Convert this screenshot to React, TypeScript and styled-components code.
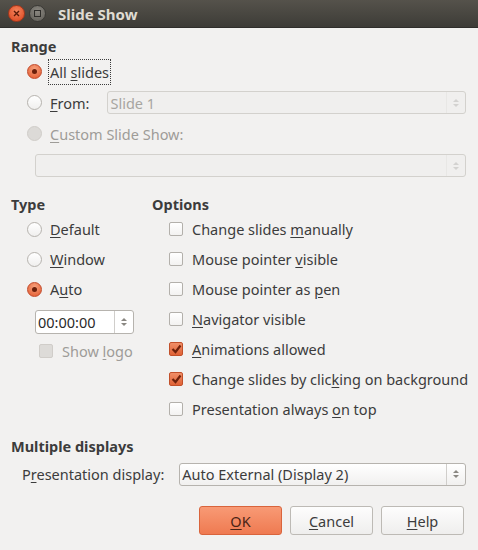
import React from 'react'
import styled, {createGlobalStyle, css} from 'styled-components'

const GlobalStyle = createGlobalStyle`
  html, body {
    margin: 0;
    padding: 0;
    background: #f2f1f0;
  }
  body {
    font-family: 'Noto Sans', 'DejaVu Sans', sans-serif;
    font-size: 14.5px;
    color: #3c3c3c;
  }
`

const Window = styled.div`
  width: 478px;
  height: 550px;
  background: #f2f1f0;
  display: flex;
  flex-direction: column;
  overflow: hidden;
`

const TitleBar = styled.div`
  height: 28px;
  flex: 0 0 28px;
  display: flex;
  align-items: center;
  padding-left: 8px;
  gap: 4px;
  background: linear-gradient(#55524b, #3d3c37);
  border-bottom: 1px solid #2f2e2b;
  box-sizing: border-box;
`

const WinButton = styled.span<{$close?: boolean}>`
  width: 17px;
  height: 17px;
  border-radius: 50%;
  display: flex;
  align-items: center;
  justify-content: center;
  box-sizing: border-box;
  ${({$close}) =>
    $close
      ? css`
          background: radial-gradient(circle at 50% 35%, #f5845c, #d9441d);
          border: 1px solid #a8361a;
        `
      : css`
          background: radial-gradient(circle at 50% 35%, #8a8780, #5f5d57);
          border: 1px solid #3a3935;
        `}
`

const Title = styled.span`
  margin-left: 8px;
  color: #dfdbd2;
  font-weight: 700;
  font-size: 15px;
`

const Body = styled.div`
  padding: 9px 12px 0 11px;
  display: flex;
  flex-direction: column;
`

const Heading = styled.div<{$mt?: number; $pl?: number}>`
  font-weight: 700;
  height: 19px;
  line-height: 19px;
  margin-top: ${({$mt}) => $mt ?? 0}px;
  padding-left: ${({$pl}) => $pl ?? 0}px;
  color: #3c3c3c;
`

const Indent = styled.div<{$pl: number}>`
  padding-left: ${({$pl}) => $pl}px;
  display: flex;
  flex-direction: column;
`

const Row = styled.div<{$h: number; $mt?: number; $pl?: number}>`
  height: ${({$h}) => $h}px;
  margin-top: ${({$mt}) => $mt ?? 0}px;
  padding-left: ${({$pl}) => $pl ?? 0}px;
  display: flex;
  align-items: center;
`

const Label = styled.span<{$disabled?: boolean; $focus?: boolean; $gap?: number}>`
  margin-left: ${({$gap}) => $gap ?? 8}px;
  white-space: nowrap;
  color: ${({$disabled}) => ($disabled ? '#9e9c98' : '#3c3c3c')};
  ${({$focus}) =>
    $focus &&
    css`
      outline: 1px dotted #3c3c3c;
      outline-offset: 0;
      padding: 2px 1px;
      margin-left: 7px;
    `}
  u {
    text-decoration-thickness: 1px;
    text-underline-offset: 2px;
  }
`

const RadioDot = styled.span<{$state: 'on' | 'off' | 'disabled'}>`
  width: 15px;
  height: 15px;
  border-radius: 50%;
  box-sizing: border-box;
  display: flex;
  align-items: center;
  justify-content: center;
  flex: 0 0 15px;
  ${({$state}) =>
    $state === 'on'
      ? css`
          background: radial-gradient(circle at 50% 30%, #f7a07c, #e2582c);
          border: 1px solid #c2492a;
          &::after {
            content: '';
            width: 5px;
            height: 5px;
            border-radius: 50%;
            background: #6b1f0a;
          }
        `
      : $state === 'off'
        ? css`
            background: linear-gradient(#ffffff, #f0efee);
            border: 1px solid #b6b3ae;
          `
        : css`
            background: #dcdad7;
            border: 1px solid #d0cdc9;
          `}
`

const CheckBox = styled.span<{$checked?: boolean; $disabled?: boolean}>`
  width: 14px;
  height: 14px;
  border-radius: 2px;
  box-sizing: border-box;
  flex: 0 0 14px;
  display: flex;
  align-items: center;
  justify-content: center;
  ${({$checked, $disabled}) =>
    $checked
      ? css`
          background: linear-gradient(#f08f68, #e06236);
          border: 1px solid #c2502a;
        `
      : $disabled
        ? css`
            background: #dddbd8;
            border: 1px solid #d0cdc9;
          `
        : css`
            background: linear-gradient(#ffffff, #f3f2f1);
            border: 1px solid #b3b0ab;
          `}
`

const Combo = styled.div<{$disabled?: boolean; $ml?: number}>`
  height: 23px;
  flex: 1;
  box-sizing: border-box;
  display: flex;
  align-items: center;
  border: 1px solid ${({$disabled}) => ($disabled ? '#d3d1cd' : '#b6b3ae')};
  border-radius: 3px;
  background: ${({$disabled}) =>
    $disabled ? '#f0efee' : 'linear-gradient(#ffffff, #f1f0ef)'};
  margin-left: ${({$ml}) => $ml ?? 0}px;
  color: ${({$disabled}) => ($disabled ? '#a7a5a1' : '#3c3c3c')};
`

const ComboText = styled.span`
  flex: 1;
  padding-left: 2px;
  white-space: nowrap;
  overflow: hidden;
`

const Stepper = styled.span<{$disabled?: boolean}>`
  width: 18px;
  height: 100%;
  border-left: 1px solid ${({$disabled}) => ($disabled ? '#e0dedb' : '#d0cecb')};
  display: flex;
  align-items: center;
  justify-content: center;
  opacity: ${({$disabled}) => ($disabled ? 0.45 : 1)};
`

const SpinBox = styled.div`
  width: 99px;
  height: 24px;
  margin-top: 6px;
  margin-left: 24px;
  box-sizing: border-box;
  display: flex;
  align-items: center;
  border: 1px solid #b6b3ae;
  border-radius: 3px;
  background: #ffffff;
  color: #2a2a2a;
`

const Columns = styled.div`
  display: flex;
`

const LeftCol = styled.div`
  flex: 0 0 141px;
  display: flex;
  flex-direction: column;
`

const RightCol = styled.div`
  flex: 1;
  min-width: 0;
  display: flex;
  flex-direction: column;
`

const DisplayRow = styled.div`
  height: 36px;
  display: flex;
  align-items: center;
  padding-left: 11px;
`

const ButtonBar = styled.div`
  display: flex;
  justify-content: flex-end;
  gap: 8px;
  margin-top: 14px;
  padding-right: 2px;
`

const Button = styled.button<{$primary?: boolean}>`
  width: 83px;
  height: 29px;
  border-radius: 3px;
  font: inherit;
  cursor: pointer;
  ${({$primary}) =>
    $primary
      ? css`
          background: linear-gradient(#f89a75, #ef7a51);
          border: 1px solid #d9643c;
          color: #4a2416;
        `
      : css`
          background: linear-gradient(#fdfdfd, #efeeed);
          border: 1px solid #bdbab5;
          color: #3c3c3c;
        `}
  u {
    text-underline-offset: 2px;
  }
`

const Arrows = ({faded}: {faded?: boolean}) => (
  <svg width="8" height="12" viewBox="0 0 8 12" style={{opacity: faded ? 0.6 : 1}}>
    <path d="M1 5 L4 2 L7 5 Z" fill="#8a8782" />
    <path d="M1 7 L4 10 L7 7 Z" fill="#8a8782" />
  </svg>
)

const Check = () => (
  <svg width="11" height="10" viewBox="0 0 11 10">
    <path d="M1.5 5 L4.5 8 L9.5 1.5" fill="none" stroke="#6e220c" strokeWidth="2.2" />
  </svg>
)

const Close = () => (
  <svg width="7" height="7" viewBox="0 0 7 7">
    <path d="M1 1 L6 6 M6 1 L1 6" stroke="#5a1a08" strokeWidth="1.4" />
  </svg>
)

const Max = () => (
  <svg width="7" height="7" viewBox="0 0 7 7">
    <rect x="0.5" y="0.5" width="6" height="6" fill="none" stroke="#2e2d2a" strokeWidth="1" />
  </svg>
)

const options: {label: React.ReactNode; checked?: boolean}[] = [
  {label: <>Change slides <u>m</u>anually</>},
  {label: <>Mouse pointer <u>v</u>isible</>},
  {label: <>Mouse pointer as <u>p</u>en</>},
  {label: <><u>N</u>avigator visible</>},
  {label: <><u>A</u>nimations allowed</>, checked: true},
  {label: <>Change slides by clic<u>k</u>ing on background</>, checked: true},
  {label: <>Presentation always <u>o</u>n top</>},
]

export default function App() {
  return (
    <Window>
      <GlobalStyle />
      <TitleBar>
        <WinButton $close>
          <Close />
        </WinButton>
        <WinButton>
          <Max />
        </WinButton>
        <Title>Slide Show</Title>
      </TitleBar>
      <Body>
        <Heading>Range</Heading>
        <Indent $pl={16}>
          <Row $h={31}>
            <RadioDot $state="on" />
            <Label $focus>
              All <u>s</u>lides
            </Label>
          </Row>
          <Row $h={31}>
            <RadioDot $state="off" />
            <Label>
              <u>F</u>rom:
            </Label>
            <Combo $disabled $ml={18}>
              <ComboText>Slide 1</ComboText>
              <Stepper $disabled>
                <Arrows faded />
              </Stepper>
            </Combo>
          </Row>
          <Row $h={31}>
            <RadioDot $state="disabled" />
            <Label $disabled>
              <u>C</u>ustom Slide Show:
            </Label>
          </Row>
          <Row $h={23} $mt={5} $pl={8}>
            <Combo $disabled>
              <ComboText />
              <Stepper $disabled>
                <Arrows faded />
              </Stepper>
            </Combo>
          </Row>
        </Indent>
        <Columns>
          <LeftCol>
            <Heading $mt={18}>Type</Heading>
            <Indent $pl={16}>
              <Row $h={30}>
                <RadioDot $state="off" />
                <Label>
                  <u>D</u>efault
                </Label>
              </Row>
              <Row $h={30}>
                <RadioDot $state="off" />
                <Label>
                  <u>W</u>indow
                </Label>
              </Row>
              <Row $h={30}>
                <RadioDot $state="on" />
                <Label>
                  A<u>u</u>to
                </Label>
              </Row>
            </Indent>
            <SpinBox>
              <ComboText>00:00:00</ComboText>
              <Stepper>
                <Arrows />
              </Stepper>
            </SpinBox>
            <Indent $pl={28}>
              <Row $h={30} $mt={2}>
                <CheckBox $disabled />
                <Label $disabled $gap={9}>
                  Show <u>l</u>ogo
                </Label>
              </Row>
            </Indent>
          </LeftCol>
          <RightCol>
            <Heading $mt={18}>Options</Heading>
            <Indent $pl={17}>
              {options.map((o, i) => (
                <Row $h={30} key={i}>
                  <CheckBox $checked={o.checked}>{o.checked && <Check />}</CheckBox>
                  <Label $gap={9}>{o.label}</Label>
                </Row>
              ))}
            </Indent>
          </RightCol>
        </Columns>
        <Heading $mt={13}>Multiple displays</Heading>
        <DisplayRow>
          <Label $gap={0}>
            P<u>r</u>esentation display:
          </Label>
          <Combo $ml={15}>
            <ComboText>Auto External (Display 2)</ComboText>
            <Stepper>
              <Arrows />
            </Stepper>
          </Combo>
        </DisplayRow>
        <ButtonBar>
          <Button $primary>
            <u>O</u>K
          </Button>
          <Button>
            <u>C</u>ancel
          </Button>
          <Button>
            <u>H</u>elp
          </Button>
        </ButtonBar>
      </Body>
    </Window>
  )
}
